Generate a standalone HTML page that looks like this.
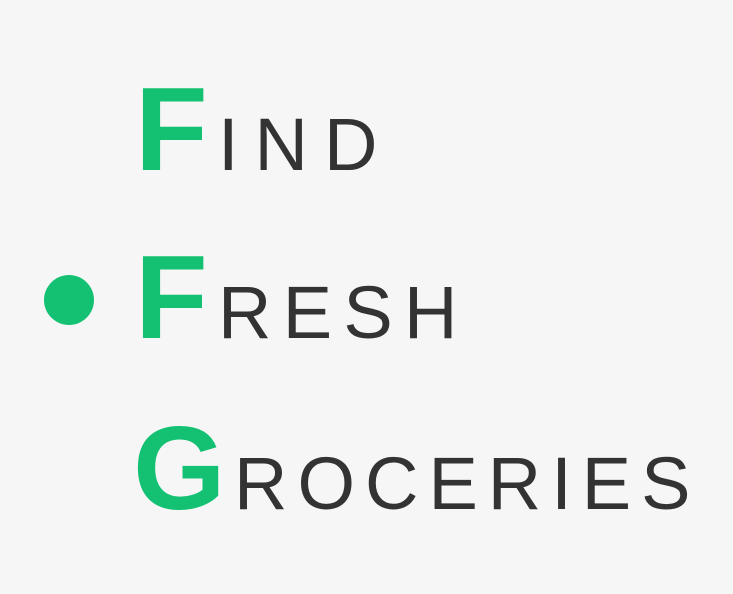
<!DOCTYPE html>
<html><head><meta charset="utf-8"><style>
html,body{margin:0;padding:0;background:#f6f6f6;}
svg{display:block}
</style></head><body>
<svg width="733" height="594" viewBox="0 0 733 594" xmlns="http://www.w3.org/2000/svg">
<rect width="733" height="594" fill="#f6f6f6"/>
<circle cx="69" cy="300" r="25" fill="#14c173"/>
<g font-family="Liberation Sans, sans-serif">
<text x="135" y="170" font-size="119" font-weight="bold" fill="#14c173">F</text>
<text x="218" y="170" font-size="74" fill="#333" letter-spacing="16">IND</text>
<text x="135" y="338" font-size="119" font-weight="bold" fill="#14c173">F</text>
<text x="218" y="338" font-size="74" fill="#333" letter-spacing="11.3">RESH</text>
<text x="133" y="509" font-size="119" font-weight="bold" fill="#14c173">G</text>
<text x="234" y="509" font-size="74" fill="#333" letter-spacing="10">ROCERIES</text>
</g>
</svg>
</body></html>
